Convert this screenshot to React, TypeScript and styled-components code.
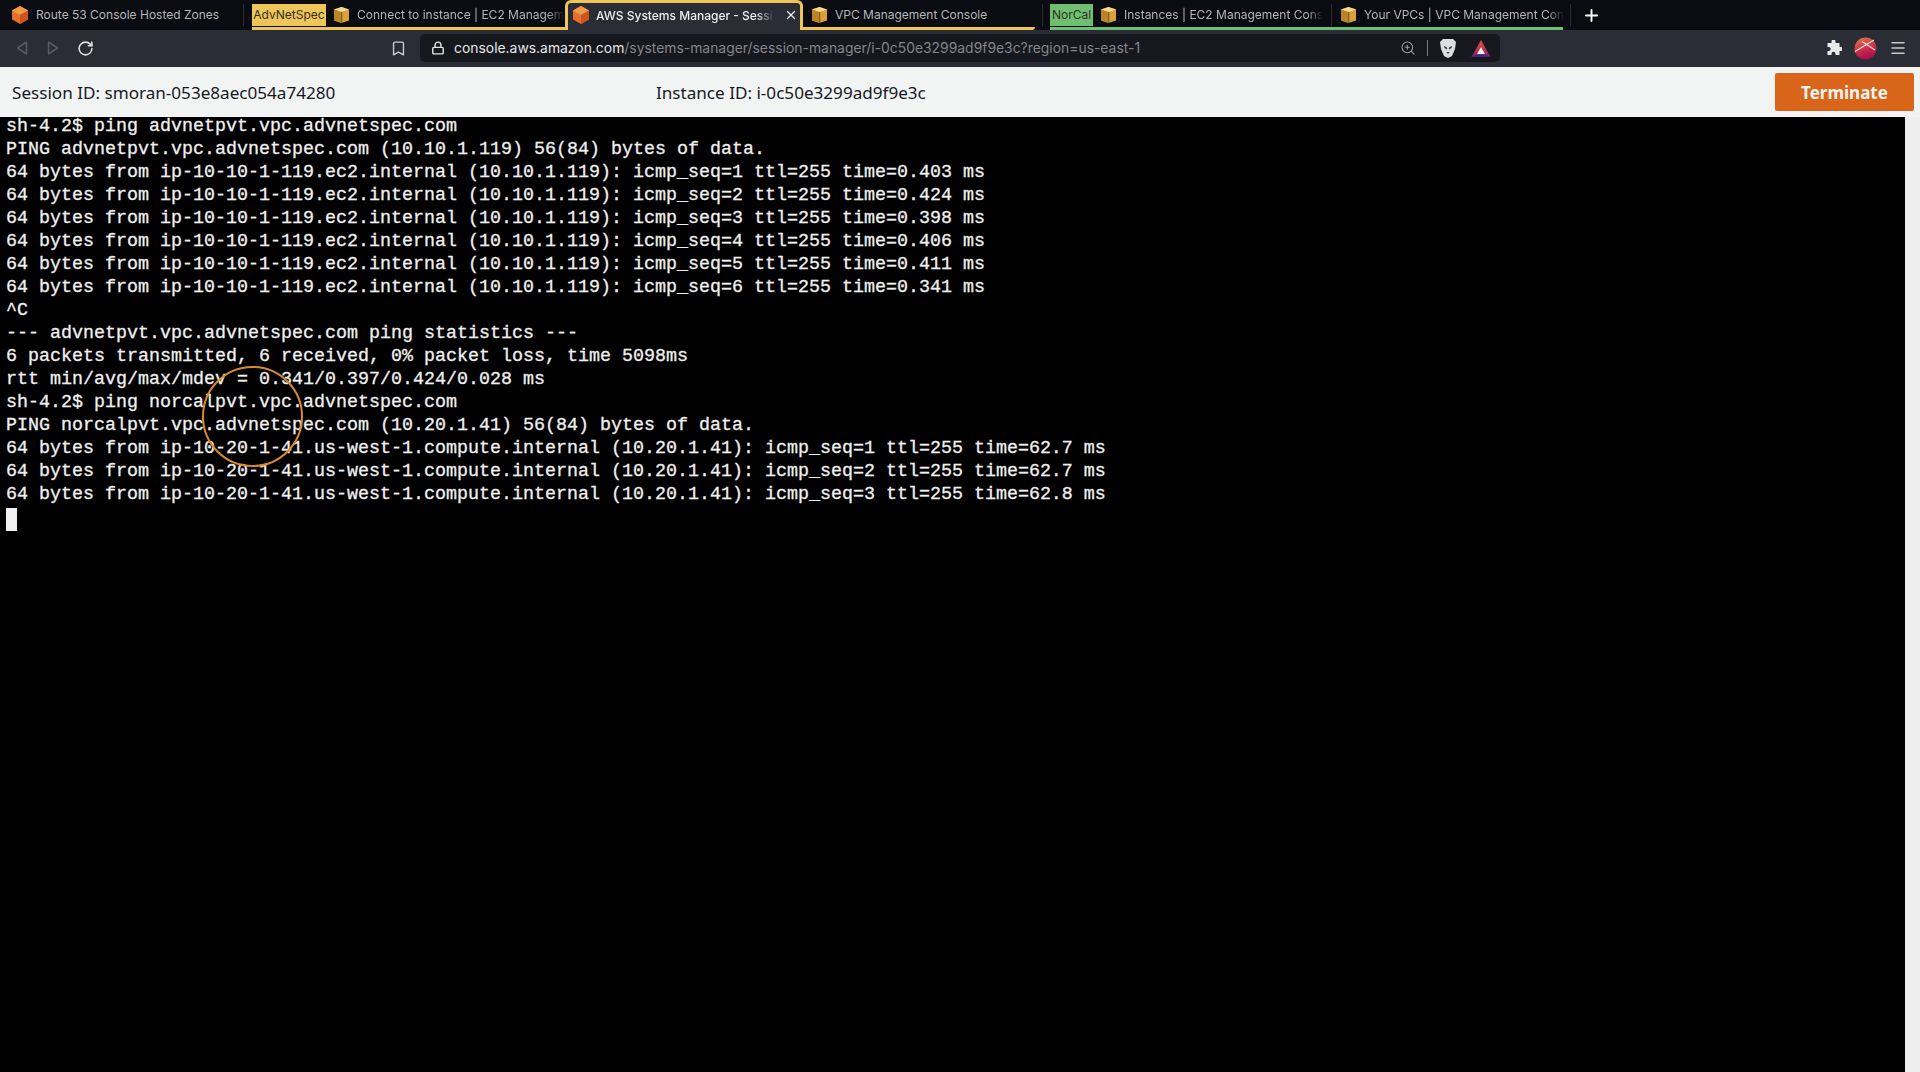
import React from 'react';
import styled, { createGlobalStyle } from 'styled-components';
import { Bookmark, Lock, Menu, Plus, RotateCw, X, ZoomIn } from 'lucide-react';

const lines = [
  'sh-4.2$ ping advnetpvt.vpc.advnetspec.com',
  'PING advnetpvt.vpc.advnetspec.com (10.10.1.119) 56(84) bytes of data.',
  '64 bytes from ip-10-10-1-119.ec2.internal (10.10.1.119): icmp_seq=1 ttl=255 time=0.403 ms',
  '64 bytes from ip-10-10-1-119.ec2.internal (10.10.1.119): icmp_seq=2 ttl=255 time=0.424 ms',
  '64 bytes from ip-10-10-1-119.ec2.internal (10.10.1.119): icmp_seq=3 ttl=255 time=0.398 ms',
  '64 bytes from ip-10-10-1-119.ec2.internal (10.10.1.119): icmp_seq=4 ttl=255 time=0.406 ms',
  '64 bytes from ip-10-10-1-119.ec2.internal (10.10.1.119): icmp_seq=5 ttl=255 time=0.411 ms',
  '64 bytes from ip-10-10-1-119.ec2.internal (10.10.1.119): icmp_seq=6 ttl=255 time=0.341 ms',
  '^C',
  '--- advnetpvt.vpc.advnetspec.com ping statistics ---',
  '6 packets transmitted, 6 received, 0% packet loss, time 5098ms',
  'rtt min/avg/max/mdev = 0.341/0.397/0.424/0.028 ms',
  'sh-4.2$ ping norcalpvt.vpc.advnetspec.com',
  'PING norcalpvt.vpc.advnetspec.com (10.20.1.41) 56(84) bytes of data.',
  '64 bytes from ip-10-20-1-41.us-west-1.compute.internal (10.20.1.41): icmp_seq=1 ttl=255 time=62.7 ms',
  '64 bytes from ip-10-20-1-41.us-west-1.compute.internal (10.20.1.41): icmp_seq=2 ttl=255 time=62.7 ms',
  '64 bytes from ip-10-20-1-41.us-west-1.compute.internal (10.20.1.41): icmp_seq=3 ttl=255 time=62.8 ms',
];

const OrangeCube = () => (
  <svg width="18" height="20" viewBox="0 0 18 20">
    <path d="M9 1l8 4.5v9L9 19l-8-4.500v-9z" fill="#e2702a" />
    <path d="M9 1l8 4.500L9 10 1 5.500z" fill="#f29a4a" />
    <path d="M9 10l8-4.500v9L9 19z" fill="#c9551c" />
  </svg>
);

const YellowBox = () => (
  <svg width="17" height="18" viewBox="0 0 17 18">
    <path d="M1 3.500L8.500 1 16 3.500v11L8.500 17 1 14.500z" fill="#d9a13a" />
    <path d="M1 3.500L8.500 1 16 3.500 8.500 6z" fill="#f3d98f" />
    <path d="M8 6h1.200v11H8z" fill="#5d4315" />
    <path d="M1 3.500L8.500 6v11L1 14.500z" fill="#b98326" />
  </svg>
);

const BackArrow = ({ flip }: { flip?: boolean }) => (
  <svg width="14" height="16" viewBox="0 0 14 16" style={flip ? { transform: 'scaleX(-1)' } : undefined}>
    <path d="M11.500 2L2.500 8l9 6z" fill="none" stroke="#565962" strokeWidth="1.600" strokeLinejoin="round" />
  </svg>
);

const BraveLion = () => (
  <svg width="18" height="21" viewBox="0 0 18 21">
    <path d="M4 1h10l3 3-1 7-3 7-4 2-4-2-3-7-1-7z" fill="#dcdde0" />
    <path d="M5 8l3 1.500v2L5.500 10zM13 8l-3 1.500v2l2.500-1.500zM7.500 14h3L9 16z" fill="#30323a" />
  </svg>
);

const BatTriangle = () => (
  <svg width="20" height="19" viewBox="0 0 20 19">
    <defs>
      <linearGradient id="batLeft" x1="0" y1="0" x2="0" y2="1">
        <stop offset="0" stopColor="#e8503a" />
        <stop offset="1" stopColor="#8a1e6a" />
      </linearGradient>
    </defs>
    <path d="M10 1l9.500 17H.5z" fill="url(#batLeft)" />
    <path d="M10 8l4 7H6z" fill="#f4efe8" />
    <path d="M.5 18l5-2.500h9l5 2.500z" fill="#3d2a80" />
  </svg>
);

const PuzzlePiece = () => (
  <svg width="16" height="16" viewBox="0 0 16 16">
    <path
      d="M5.500 1.500a2 2 0 0 1 4 0V3h4v4h1.300a2 2 0 0 1 0 4H13.500v4h-4v-1.200a2 2 0 0 0-4 0V15h-4v-4h1.200a2 2 0 0 0 0-4H1.500V3h4z"
      fill="#e9e9ea"
    />
  </svg>
);

const Avatar = () => (
  <svg width="23" height="23" viewBox="0 0 23 23">
    <defs>
      <linearGradient id="avatarFill" x1="0.3" y1="0" x2="0.6" y2="1">
        <stop offset="0" stopColor="#d9734a" />
        <stop offset="0.55" stopColor="#c92a4c" />
        <stop offset="1" stopColor="#a50d48" />
      </linearGradient>
    </defs>
    <circle cx="11.500" cy="11.500" r="11" fill="url(#avatarFill)" />
    <path d="M1 14.500L20 3M8 4.500l13 8.500" stroke="#f5dcd0" strokeWidth="1.200" fill="none" />
  </svg>
);

const App = () => {
  return (
    <Page>
      <GlobalStyle />
      <TabStrip>
        <Tab $width={243} $pad={11}>
          <OrangeCube />
          <TabTitle>Route 53 Console Hosted Zones</TabTitle>
        </Tab>
        <Separator />
        <Group $color="#eec558" $width={313} $marginLeft={8}>
          <GroupTag $color="#eec558" $width={74}>AdvNetSpec</GroupTag>
          <Tab $width={239} $pad={7}>
            <YellowBox />
            <FadeTitle>Connect to instance | EC2 Managem</FadeTitle>
          </Tab>
        </Group>
        <ActiveTab>
          <OrangeCube />
          <ActiveTitle>AWS Systems Manager - Sessi</ActiveTitle>
          <X size={14} color="#e8e8ea" strokeWidth={2.4} />
        </ActiveTab>
        <Group $color="#eec558" $width={232} $roundEnd>
          <Tab $width={232} $pad={8}>
            <YellowBox />
            <TabTitle>VPC Management Console</TabTitle>
          </Tab>
        </Group>
        <Separator $marginLeft={7} />
        <Group $color="#6fbf73" $width={513} $marginLeft={7}>
          <GroupTag $color="#6fbf73" $width={43}>NorCal</GroupTag>
          <Tab $width={238} $pad={7}>
            <YellowBox />
            <FadeTitle>Instances | EC2 Management Cons</FadeTitle>
          </Tab>
          <Separator />
          <Tab $width={231} $pad={8}>
            <YellowBox />
            <FadeTitle>Your VPCs | VPC Management Con</FadeTitle>
          </Tab>
        </Group>
        <Separator $marginLeft={7} />
        <NewTab>
          <Plus size={19} color="#ffffff" strokeWidth={2.4} />
        </NewTab>
      </TabStrip>

      <Toolbar>
        <NavGroup>
          <BackArrow />
          <BackArrow flip />
          <RotateCw size={17} color="#dfe0e3" strokeWidth={2.2} />
        </NavGroup>
        <Bookmark size={17} color="#c9cace" strokeWidth={2} />
        <AddressBar>
          <Lock size={14} color="#e4e4e6" strokeWidth={2.4} />
          <Url>
            console.aws.amazon.com<UrlRest>/systems-manager/session-manager/i-0c50e3299ad9f9e3c?region=us-east-1</UrlRest>
          </Url>
          <ZoomIn size={16} color="#9a9ba0" strokeWidth={1.6} />
          <AddressDivider />
          <BraveSlot>
            <BraveLion />
          </BraveSlot>
          <BatTriangle />
        </AddressBar>
        <ToolActions>
          <PuzzlePiece />
          <Avatar />
          <Menu size={18} color="#c9cace" strokeWidth={2} />
        </ToolActions>
      </Toolbar>

      <SessionBar>
        <SessionText>Session ID: smoran-053e8aec054a74280</SessionText>
        <InstanceText>Instance ID: i-0c50e3299ad9f9e3c</InstanceText>
        <TerminateButton>Terminate</TerminateButton>
      </SessionBar>

      <TerminalArea>
        <Terminal>
          {lines.map((line: string, i: number) => {
            return <TermLine key={i}>{line}</TermLine>;
          })}
          <Cursor />
          <ClickRing />
        </Terminal>
        <Gutter />
      </TerminalArea>
    </Page>
  );
};

export default App;

const GlobalStyle = createGlobalStyle`
  html, body {
    margin: 0;
    padding: 0;
    background: #000;
  }
  * {
    box-sizing: border-box;
  }
  svg {
    flex: none;
  }
`;

const Page = styled.div`
  display: flex;
  flex-direction: column;
  width: 1920px;
  height: 1072px;
  overflow: hidden;
  font-family: Inter, 'Noto Sans', sans-serif;
`;

const TabStrip = styled.div`
  display: flex;
  align-items: stretch;
  height: 30px;
  flex: none;
  background-color: #0b0c11;
`;

const Tab = styled.div<{ $width: number; $pad: number }>`
  display: flex;
  align-items: center;
  gap: 7px;
  flex: none;
  width: ${(p) => p.$width}px;
  height: 27px;
  padding-top: 2px;
  padding-left: ${(p) => p.$pad}px;
  overflow: hidden;
`;

const TabTitle = styled.span`
  font-size: 12px;
  color: #b4b5ba;
  white-space: nowrap;
`;

const FadeTitle = styled(TabTitle)`
  flex: none;
  -webkit-mask-image: linear-gradient(to right, #000 92%, transparent);
  mask-image: linear-gradient(to right, #000 92%, transparent);
`;

const Separator = styled.div<{ $marginLeft?: number }>`
  flex: none;
  width: 1px;
  height: 22px;
  margin: 4px 0 0 ${(p) => p.$marginLeft ?? 0}px;
  background-color: #2c2d34;
`;

const Group = styled.div<{ $color: string; $width: number; $marginLeft?: number; $roundEnd?: boolean }>`
  display: flex;
  flex: none;
  width: ${(p) => p.$width}px;
  margin-left: ${(p) => p.$marginLeft ?? 0}px;
  border-bottom: 3px solid ${(p) => p.$color};
  border-bottom-right-radius: ${(p) => (p.$roundEnd ? '3px' : '0')};
`;

const GroupTag = styled.div<{ $color: string; $width: number }>`
  flex: none;
  align-self: flex-start;
  width: ${(p) => p.$width}px;
  height: 22px;
  margin-top: 4px;
  background-color: ${(p) => p.$color};
  color: #33301f;
  font-size: 12px;
  line-height: 22px;
  text-align: center;
  white-space: nowrap;
`;

const ActiveTab = styled.div`
  display: flex;
  align-items: center;
  flex: none;
  gap: 6px;
  width: 238px;
  height: 30px;
  padding: 0 2px 3px 4px;
  background-color: #2a2c36;
  border: 3px solid #eec558;
  border-bottom: none;
  border-radius: 6px 6px 0 0;
`;

const ActiveTitle = styled.span`
  flex: 1;
  font-size: 12px;
  font-weight: 500;
  color: #eeeef0;
  white-space: nowrap;
  -webkit-mask-image: linear-gradient(to right, #000 88%, transparent 98%);
  mask-image: linear-gradient(to right, #000 88%, transparent 98%);
`;

const NewTab = styled.div`
  display: flex;
  align-items: center;
  justify-content: center;
  width: 40px;
`;

const Toolbar = styled.div`
  display: flex;
  align-items: center;
  flex: none;
  height: 37px;
  padding: 0 0 1px 15px;
  background-color: #2a2c36;
`;

const NavGroup = styled.div`
  display: flex;
  align-items: center;
  gap: 17px;
  width: 375px;
`;

const AddressBar = styled.div`
  display: flex;
  align-items: center;
  flex: none;
  width: 1080px;
  height: 28px;
  margin-left: 13px;
  padding: 0 9px 0 11px;
  background-color: #17181e;
  border-radius: 5px;
`;

const Url = styled.div`
  flex: 1;
  margin-left: 9px;
  font-size: 13.9px;
  color: #e6e6e8;
  white-space: nowrap;
`;

const UrlRest = styled.span`
  color: #84858b;
`;

const AddressDivider = styled.div`
  width: 1px;
  height: 16px;
  margin: 0 11px;
  background-color: #77787e;
`;

const BraveSlot = styled.div`
  display: flex;
  margin-right: 14px;
`;

const ToolActions = styled.div`
  display: flex;
  align-items: center;
  gap: 12px;
  margin-left: auto;
  padding-right: 13px;
`;

const SessionBar = styled.div`
  display: flex;
  align-items: center;
  flex: none;
  height: 50px;
  padding: 0 6px 0 12px;
  background-color: #f2f3f3;
  color: #16191f;
  font-family: 'Noto Sans', sans-serif;
  font-size: 17.1px;
`;

const SessionText = styled.div`
  width: 644px;
`;

const InstanceText = styled.div`
  flex: 1;
`;

const TerminateButton = styled.button`
  width: 139px;
  height: 38px;
  border: none;
  border-radius: 2px;
  background-color: #d9651b;
  color: #f8f4ef;
  font-family: 'Noto Sans', sans-serif;
  font-size: 17px;
  font-weight: 700;
`;

const TerminalArea = styled.div`
  display: flex;
  flex: 1;
  min-height: 0;
`;

const Terminal = styled.div`
  position: relative;
  flex: 1;
  padding-left: 6px;
  background-color: #000;
`;

const TermLine = styled.div`
  height: 23px;
  font-family: 'Liberation Mono', monospace;
  font-size: 18.33px;
  line-height: 19px;
  color: #f0f0f0;
  white-space: pre;
  -webkit-text-stroke: 0.3px #f0f0f0;
`;

const Cursor = styled.div`
  width: 11px;
  height: 23px;
  background-color: #f0f0f0;
`;

const ClickRing = styled.div`
  position: absolute;
  left: 202px;
  top: 249px;
  width: 101px;
  height: 101px;
  border: 2px solid #d98a2b;
  border-radius: 50%;
`;

const Gutter = styled.div`
  flex: none;
  width: 15px;
  background-color: #eeeeee;
`;
